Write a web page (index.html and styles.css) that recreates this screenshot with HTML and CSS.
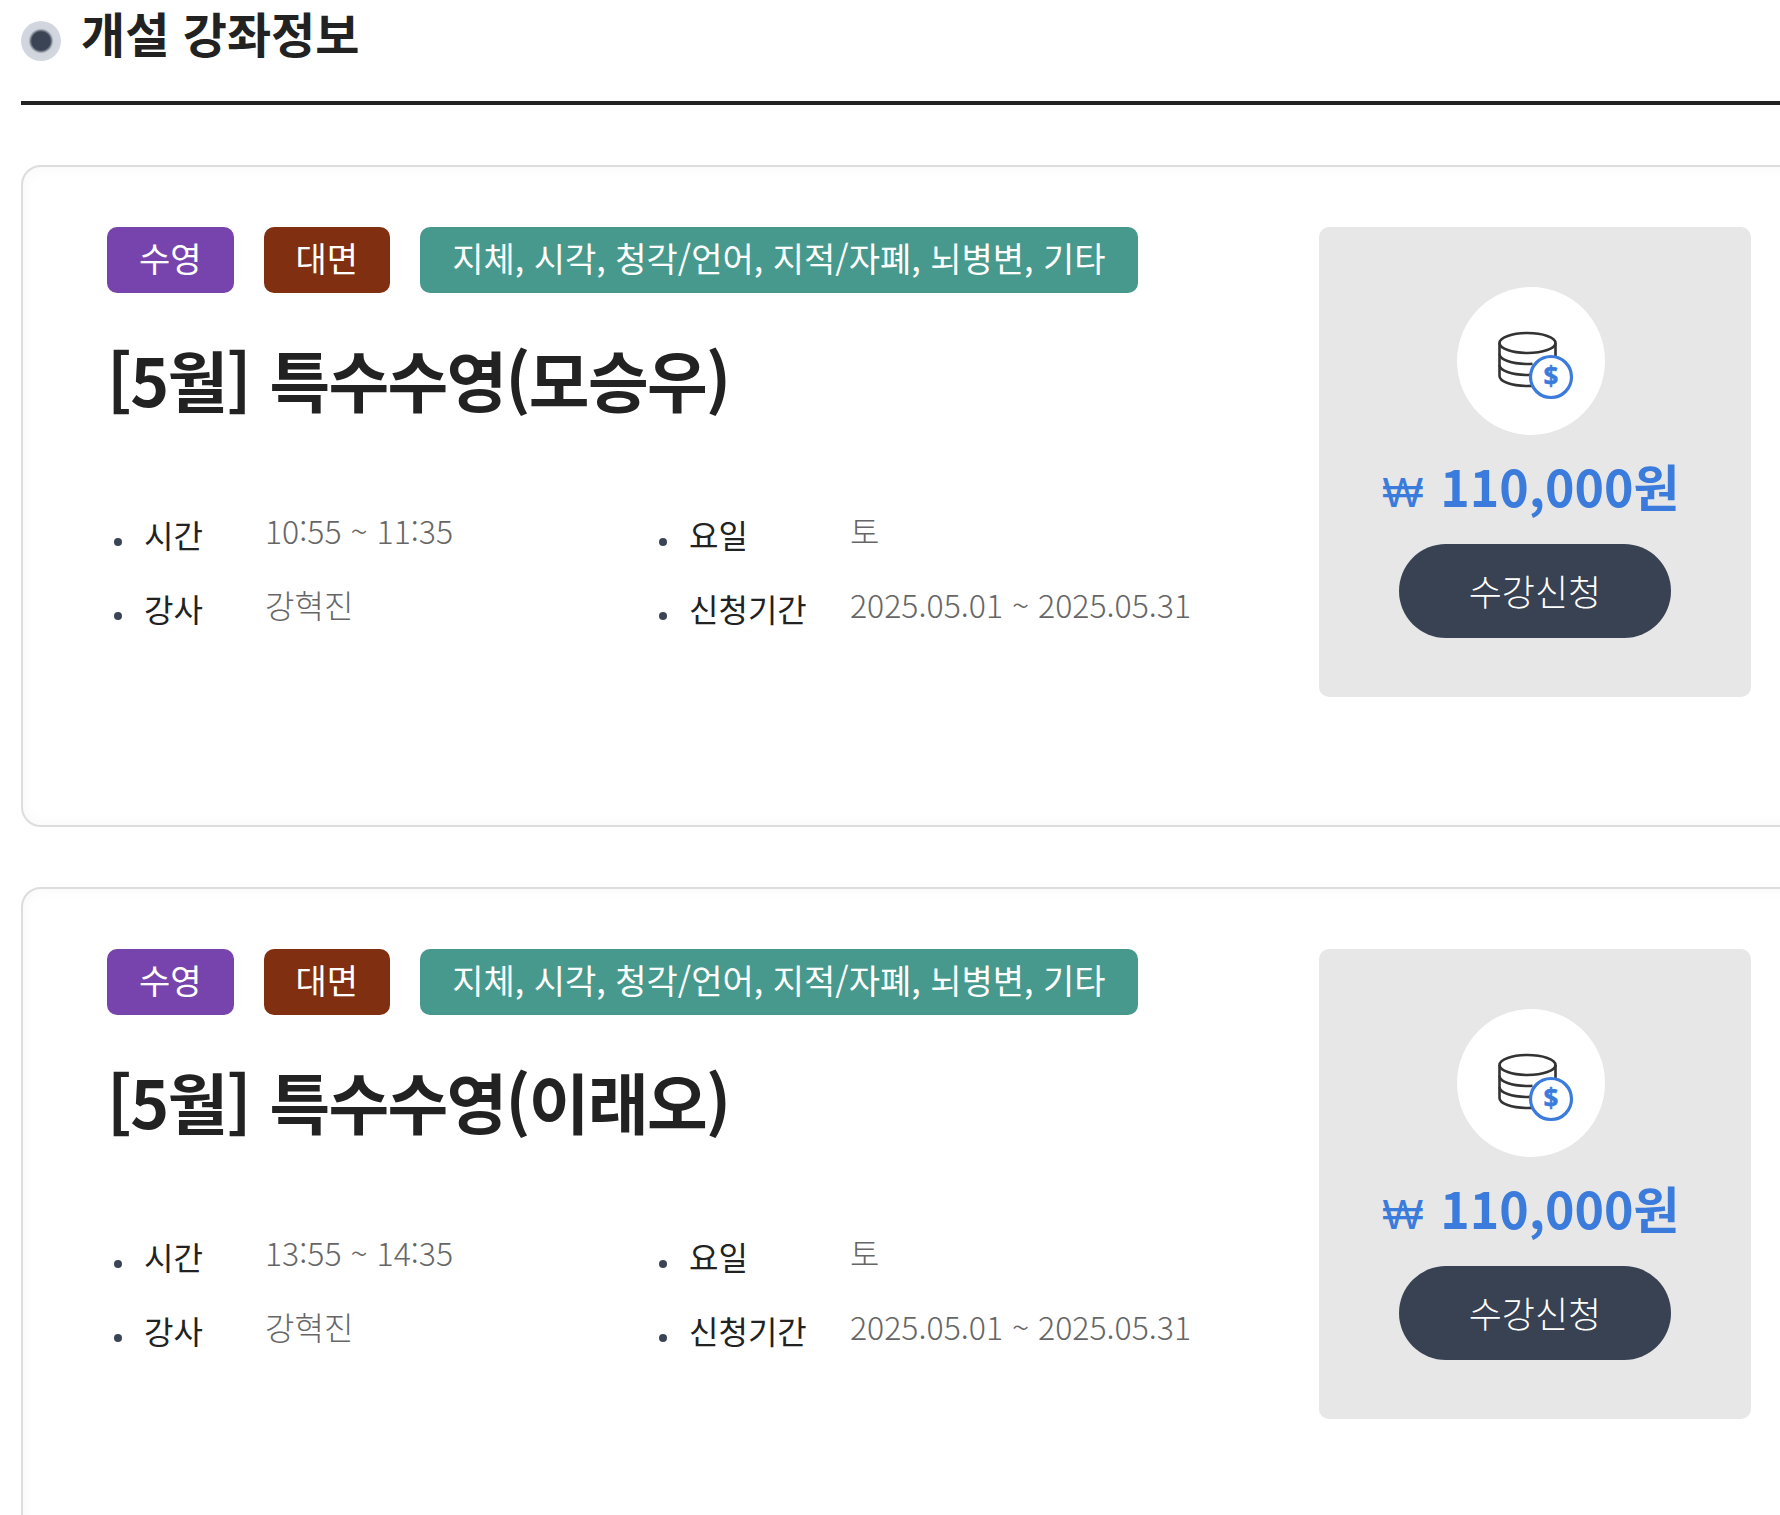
FILE: index.html
```html
<!DOCTYPE html>
<html lang="ko">
<head>
    <meta charset="UTF-8">
    <title>개설 강좌정보</title>
    <link rel="stylesheet" href="styles.css">
</head>
<body>
    <div class="wrap">
        <div class="sec-head">
            <span class="sec-dot"></span>
            <h2>개설 강좌정보</h2>
        </div>

        <div class="course">
            <div class="course-main">
                <div class="tags">
                    <span class="tag tag-purple">수영</span>
                    <span class="tag tag-brown">대면</span>
                    <span class="tag tag-green">지체, 시각, 청각/언어, 지적/자폐, 뇌병변, 기타</span>
                </div>
                <h3>[5월] 특수수영(모승우)</h3>
                <ul class="info">
                    <li><b>시간</b><span>10:55 ~ 11:35</span></li>
                    <li class="col2"><b>요일</b><span>토</span></li>
                    <li><b>강사</b><span>강혁진</span></li>
                    <li class="col2"><b>신청기간</b><span>2025.05.01 ~ 2025.05.31</span></li>
                </ul>
            </div>
            <div class="course-side">
                <div class="coin">
                    <svg viewBox="0 0 88 88" width="88" height="88">
                        <g fill="none" stroke="#333" stroke-width="2.6">
                            <ellipse cx="40.5" cy="26" rx="28" ry="10"/>
                            <path d="M12.5 26v33c0 5.5 12 10 28 10 3 0 5 0 7-.5"/>
                            <path d="M12.5 37c0 5.5 12 10 28 10 2 0 3.5 0 5-.2"/>
                            <path d="M12.5 48c0 5.5 12 10 28 10 1 0 2 0 3-.1"/>
                            <path d="M68.5 26v14"/>
                        </g>
                        <circle cx="64" cy="60" r="20.5" fill="#fff" stroke="#3a7bdc" stroke-width="3.2"/>
                        <text x="64" y="69" class="coin-sign">$</text>
                    </svg>
                </div>
                <p class="price"><em>₩</em> 110,000원</p>
                <a class="apply">수강신청</a>
            </div>
        </div>

        <div class="course">
            <div class="course-main">
                <div class="tags">
                    <span class="tag tag-purple">수영</span>
                    <span class="tag tag-brown">대면</span>
                    <span class="tag tag-green">지체, 시각, 청각/언어, 지적/자폐, 뇌병변, 기타</span>
                </div>
                <h3>[5월] 특수수영(이래오)</h3>
                <ul class="info">
                    <li><b>시간</b><span>13:55 ~ 14:35</span></li>
                    <li class="col2"><b>요일</b><span>토</span></li>
                    <li><b>강사</b><span>강혁진</span></li>
                    <li class="col2"><b>신청기간</b><span>2025.05.01 ~ 2025.05.31</span></li>
                </ul>
            </div>
            <div class="course-side">
                <div class="coin">
                    <svg viewBox="0 0 88 88" width="88" height="88">
                        <g fill="none" stroke="#333" stroke-width="2.6">
                            <ellipse cx="40.5" cy="26" rx="28" ry="10"/>
                            <path d="M12.5 26v33c0 5.5 12 10 28 10 3 0 5 0 7-.5"/>
                            <path d="M12.5 37c0 5.5 12 10 28 10 2 0 3.5 0 5-.2"/>
                            <path d="M12.5 48c0 5.5 12 10 28 10 1 0 2 0 3-.1"/>
                            <path d="M68.5 26v14"/>
                        </g>
                        <circle cx="64" cy="60" r="20.5" fill="#fff" stroke="#3a7bdc" stroke-width="3.2"/>
                        <text x="64" y="69" class="coin-sign">$</text>
                    </svg>
                </div>
                <p class="price"><em>₩</em> 110,000원</p>
                <a class="apply">수강신청</a>
            </div>
        </div>
    </div>
</body>
</html>
```

FILE: styles.css
```css
html, body {
    margin: 0;
    padding: 0;
    overflow: hidden;
    height: 1515px;
    background: #fff;
}

body {
    font-family: "Noto Sans CJK KR", "Noto Sans", sans-serif;
    color: #222;
}

.wrap {
    width: 1830px;
    margin-left: 21px;
}

.sec-head {
    display: flex;
    align-items: flex-start;
    height: 101px;
    border-bottom: 4px solid #222;
    margin-bottom: 60px;
}

.sec-dot {
    width: 40px;
    height: 40px;
    margin-top: 21px;
    border-radius: 50%;
    background: radial-gradient(circle closest-side, #3a4454 0, #3a4454 46%, #d0d4dc 62%, #d3d7df 100%);
}

.sec-head h2 {
    margin: -3px 0 0 20px;
    font-size: 48px;
    line-height: 70px;
    font-weight: 700;
}

.course {
    display: flex;
    box-sizing: border-box;
    height: 662px;
    padding: 60px 85px 0 84px;
    margin-bottom: 60px;
    border: 2px solid #ddd;
    border-radius: 20px;
    box-shadow: inset 0 0 14px rgba(0, 0, 0, 0.04);
}

.course-main {
    width: 1212px;
    flex: none;
}

.tags {
    display: flex;
    gap: 30px;
}

.tag {
    height: 66px;
    line-height: 62px;
    padding: 0 32px;
    border-radius: 10px;
    color: #fff;
    font-size: 34px;
    font-weight: 400;
}

.tag-purple {
    background: #7744ae;
}

.tag-brown {
    background: #803010;
}

.tag-green {
    background: #46998c;
}

.course-main h3 {
    margin: 37px 0 0;
    font-size: 66px;
    line-height: 96px;
    font-weight: 700;
    letter-spacing: -1.7px;
    word-spacing: 3px;
}

.info {
    display: grid;
    grid-template-columns: 545px 1fr;
    grid-auto-rows: 74px;
    list-style: none;
    margin: 85px 0 0;
    padding: 0;
}

.info li {
    display: flex;
    position: relative;
    padding-left: 37px;
}

.info li:before {
    content: "";
    position: absolute;
    left: 7px;
    top: 27px;
    width: 8px;
    height: 8px;
    border-radius: 50%;
    background: #3a4454;
}

.info b {
    width: 121px;
    flex: none;
    font-size: 32px;
    line-height: 46px;
    font-weight: 400;
}

.info .col2 b {
    width: 161px;
}

.info span {
    font-size: 32px;
    line-height: 38px;
    font-weight: 300;
    color: #666;
}

.course-side {
    box-sizing: border-box;
    width: 432px;
    height: 470px;
    flex: none;
    padding-top: 60px;
    border-radius: 10px;
    background: #e7e7e7;
    text-align: center;
}

.coin {
    display: flex;
    width: 148px;
    height: 148px;
    margin: 0 0 0 138px;
    align-items: center;
    justify-content: center;
    border-radius: 50%;
    background: #fff;
}

.coin-sign {
    font-family: "Noto Sans", sans-serif;
    font-size: 26px;
    font-weight: 700;
    fill: #3a7bdc;
    stroke: #3a7bdc;
    stroke-width: 0.5;
    text-anchor: middle;
}

.price {
    margin: 11px 8px 0 0;
    font-size: 50px;
    line-height: 78px;
    font-weight: 700;
    color: #3a7bdc;
}

.price em {
    font-family: "Open Sans", sans-serif;
    font-style: normal;
    font-size: 43px;
    font-weight: 400;
    line-height: 0;
    margin-right: 3px;
}

.apply {
    display: block;
    width: 272px;
    height: 94px;
    margin: 20px auto 0;
    border-radius: 47px;
    background: #384252;
    color: #fff;
    font-size: 36px;
    line-height: 92px;
    font-weight: 300;
}
```
